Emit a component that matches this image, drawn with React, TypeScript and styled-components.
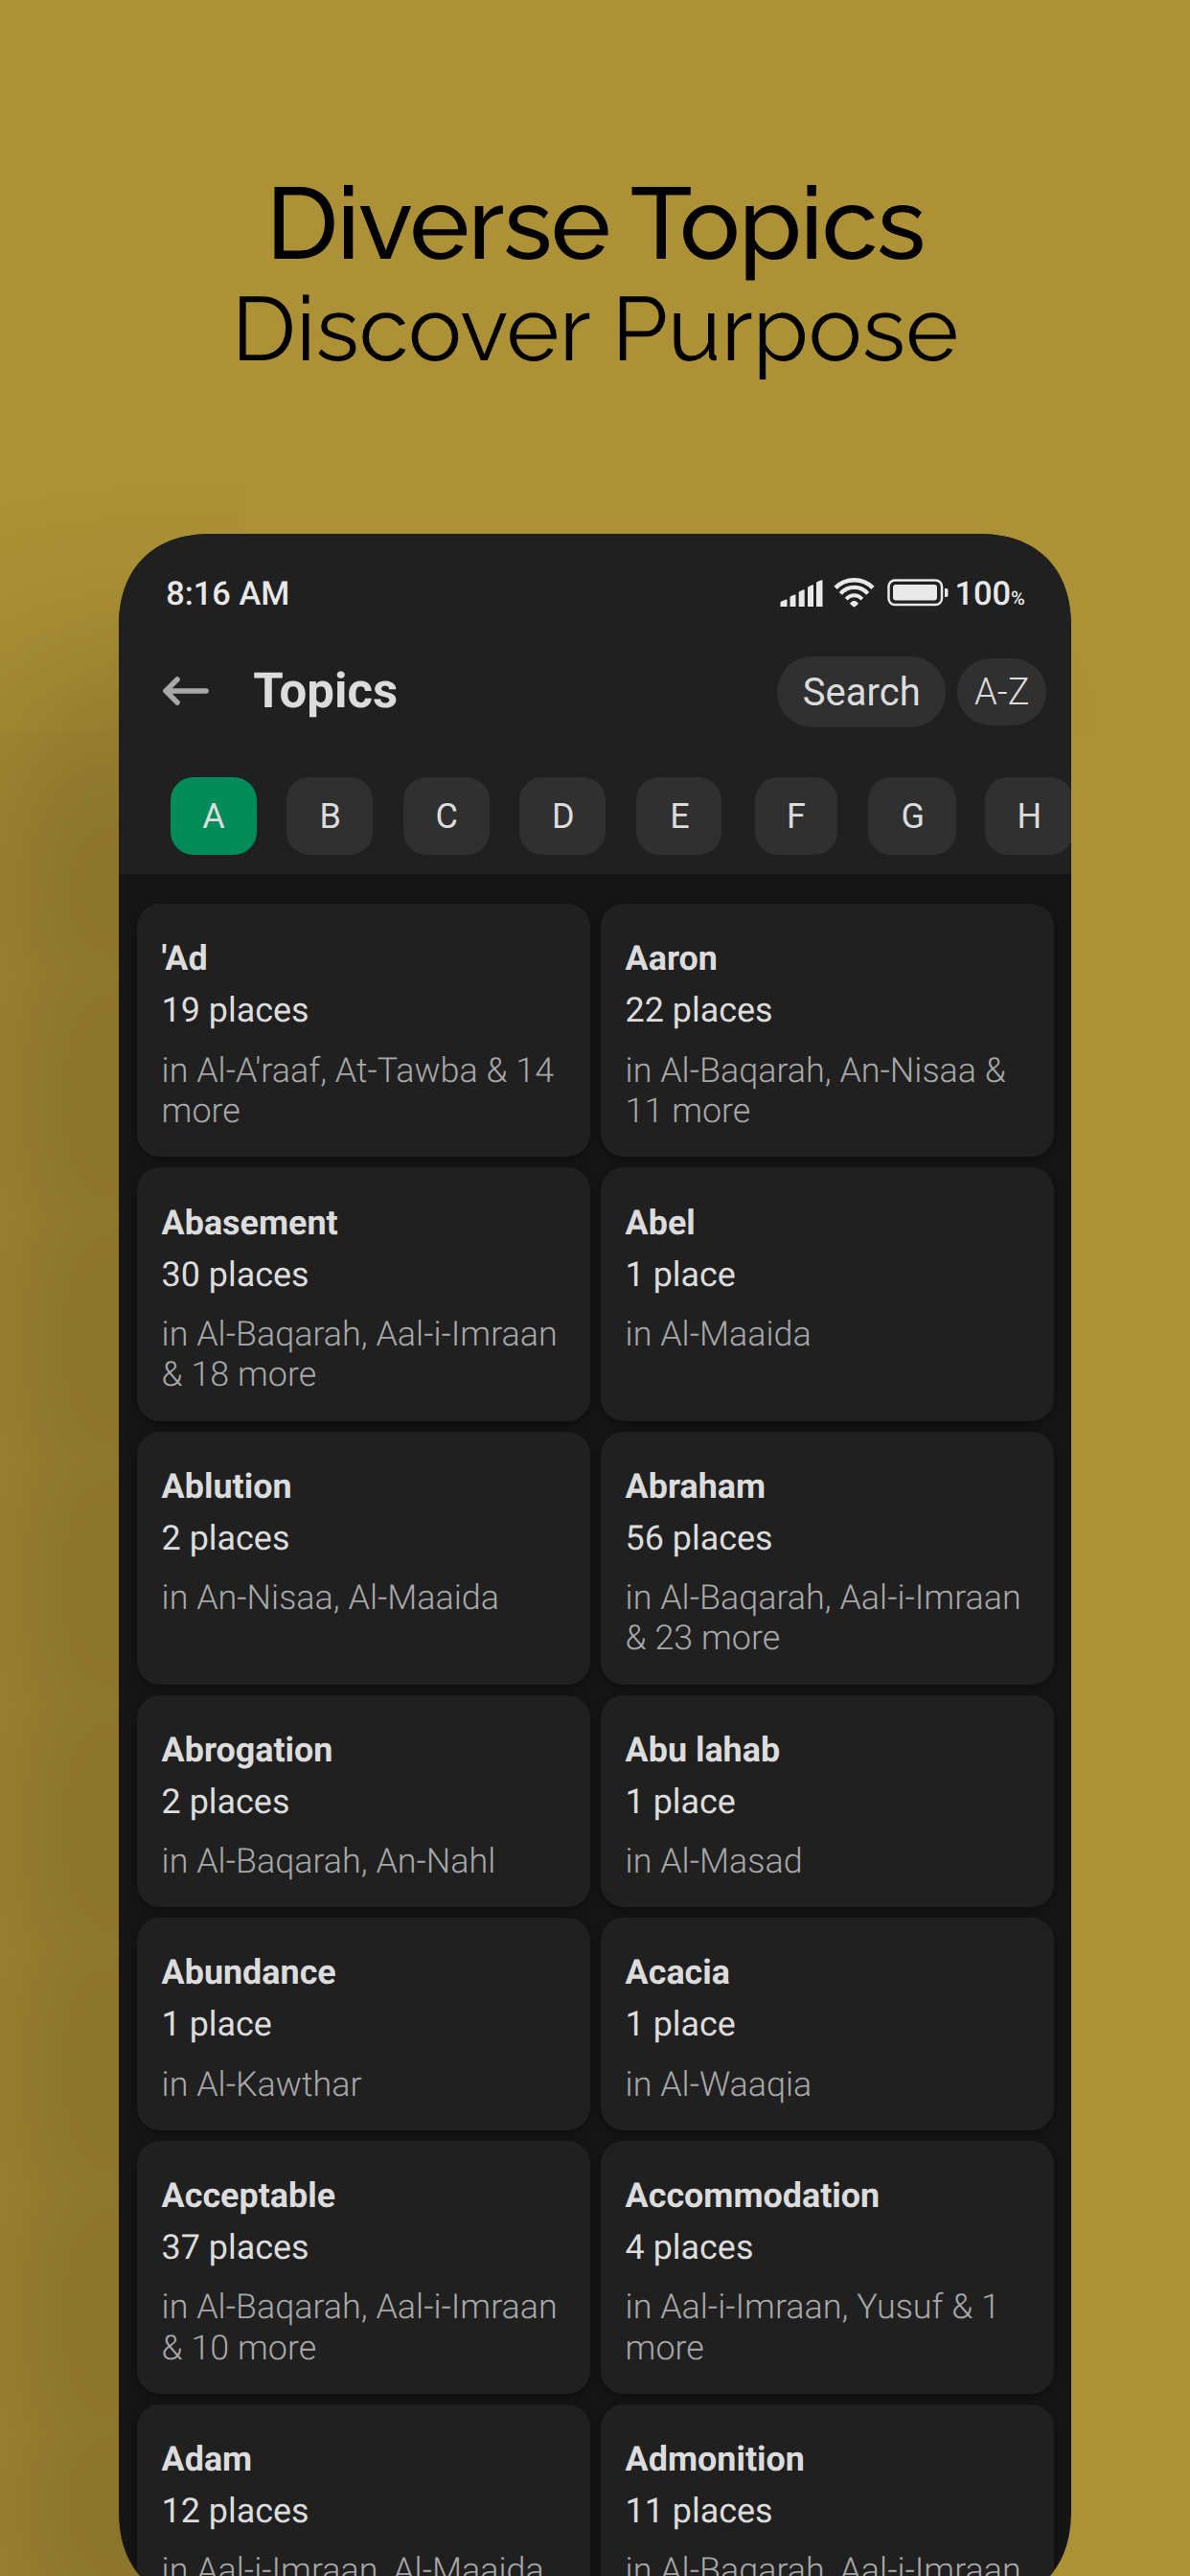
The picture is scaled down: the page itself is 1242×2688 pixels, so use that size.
import React from "react";
import styled, { createGlobalStyle } from "styled-components";

const GlobalStyle = createGlobalStyle`
  * { box-sizing: border-box; }
  html, body { margin: 0; padding: 0; background: #ac9136; }
`;

const Poster = styled.main`
  width: 1242px;
  height: 2688px;
  overflow: hidden;
  background: #ac9136;
  display: flex;
  flex-direction: column;
  align-items: center;
  font-family: Roboto, "Liberation Sans", sans-serif;
  text-rendering: geometricPrecision;
`;

const Headline = styled.header`
  height: 557px;
  flex: none;
  padding-top: 173px;
  display: flex;
  flex-direction: column;
  align-items: center;
  color: #000;
  font-family: Raleway, Lato, sans-serif;
  white-space: nowrap;
`;

const Title = styled.h1`
  margin: 0;
  font-size: 105.6px;
  line-height: 120px;
  font-weight: 500;
  letter-spacing: -1.6px;
`;

const Subtitle = styled.p`
  margin: 0;
  font-size: 94px;
  line-height: 100px;
  font-weight: 400;
`;

const Phone = styled.section`
  width: 993.6px;
  height: 2160px;
  flex: none;
  overflow: hidden;
  border-radius: 98px;
  corner-shape: superellipse(1.2);
  background: #151515;
  box-shadow: -150px 150px 200px rgba(0, 0, 0, 0.225);
`;

const TopArea = styled.div`
  height: 355px;
  background: #202020;
`;

const StatusBar = styled.div`
  height: 124px;
  padding: 2px 48px 0 49px;
  display: flex;
  align-items: center;
  justify-content: space-between;
  color: #e8e8e8;
  font-size: 34.4px;
  font-weight: 500;
`;

const StatusIcons = styled.div`
  display: flex;
  align-items: center;
`;

const StatusIcon = styled.svg`
  flex: none;
  margin-bottom: 3px;
`;

const Level = styled.span`
  margin-left: 5.500px;
`;

const BatterySlot = styled.span`
  display: flex;
  margin-left: 12px;
`;

const Percent = styled.small`
  font-size: 20px;
`;

const AppBar = styled.div`
  height: 82px;
  padding: 0 25.500px 0 45px;
  display: flex;
  align-items: center;
`;

const BackIcon = styled.svg`
  flex: none;
  margin-bottom: 2px;
`;

const ScreenTitle = styled.h2`
  margin: 0 auto 0 45px;
  font-size: 51px;
  line-height: 60px;
  font-weight: 700;
  color: #dcdcdc;
`;

const Pill = styled.button<{ $w: number; $h: number; $light?: boolean }>`
  width: ${(p) => p.$w}px;
  height: ${(p) => p.$h}px;
  margin-left: 12px;
  padding: 0;
  border: 0;
  border-radius: 37px;
  background: #303030;
  color: #dcdcdc;
  font-family: inherit;
  font-size: ${(p) => (p.$light ? 38 : 40)}px;
  font-weight: ${(p) => (p.$light ? 300 : 400)};
`;

const Letters = styled.nav`
  display: flex;
  padding: 48px 0 0 53.400px;
  overflow: hidden;
`;

const Slot = styled.div`
  flex: 0 0 121.6px;
`;

const Letter = styled.button<{ $active: boolean; $w: number; $shift: number }>`
  display: block;
  width: ${(p) => p.$w}px;
  height: 81px;
  margin-left: ${(p) => p.$shift}px;
  padding: 0 0 0 1px;
  border: 0;
  border-radius: 24px;
  background: ${(p) => (p.$active ? "#008c5a" : "#303030")};
  color: #dcdcdc;
  font-family: inherit;
  font-size: 36px;
`;

const Grid = styled.div`
  display: grid;
  grid-template-columns: 473px 473px;
  column-gap: 11px;
  row-gap: 11px;
  padding: 31.300px 0 0 18.400px;
`;

const Card = styled.article`
  padding: 35.100px 20px 26.700px 26px;
  border-radius: 24px;
  background: #202020;
  box-shadow: 0 3px 8px rgba(0, 0, 0, 0.35);
`;

const Name = styled.h3`
  margin: 0;
  font-size: 35.9px;
  line-height: 44px;
  font-weight: 700;
  color: #dcdcdc;
`;

const Count = styled.p`
  margin: 11px 0 0;
  font-size: 35.9px;
  line-height: 42px;
  color: #dcdcdc;
`;

const Places = styled.p`
  margin: 20.200px 0 0;
  font-size: 35.9px;
  line-height: 42.600px;
  font-weight: 300;
  color: #a8a8a8;
  white-space: pre-line;
`;

const letters: [string, number, number][] = [
  ["A", 90, 0], ["B", 90, 0], ["C", 90, 0], ["D", 90, 0],
  ["E", 89, 0.5], ["F", 86, 2], ["G", 92, -1], ["H", 92, -1],
];

const topics: [string, string, string][] = [
  ["'Ad", "19 places", "in Al-A'raaf, At-Tawba & 14\nmore"],
  ["Aaron", "22 places", "in Al-Baqarah, An-Nisaa &\n11 more"],
  ["Abasement", "30 places", "in Al-Baqarah, Aal-i-Imraan\n& 18 more"],
  ["Abel", "1 place", "in Al-Maaida"],
  ["Ablution", "2 places", "in An-Nisaa, Al-Maaida"],
  ["Abraham", "56 places", "in Al-Baqarah, Aal-i-Imraan\n& 23 more"],
  ["Abrogation", "2 places", "in Al-Baqarah, An-Nahl"],
  ["Abu lahab", "1 place", "in Al-Masad"],
  ["Abundance", "1 place", "in Al-Kawthar"],
  ["Acacia", "1 place", "in Al-Waaqia"],
  ["Acceptable", "37 places", "in Al-Baqarah, Aal-i-Imraan\n& 10 more"],
  ["Accommodation", "4 places", "in Aal-i-Imraan, Yusuf & 1\nmore"],
  ["Adam", "12 places", "in Aal-i-Imraan, Al-Maaida"],
  ["Admonition", "11 places", "in Al-Baqarah, Aal-i-Imraan"],
];

const Signal = () => (
  <StatusIcon width="56" height="32" viewBox="0 0 56 32" fill="#e8e8e8">
    <path d="M0.5 30v-4q0-1 1-1.500l5-2q1-.3 1 .7v6.800z" />
    <path d="M10.500 30V20.500q0-1 1-1.500l4-1.500q1-.3 1 .7V30z" />
    <path d="M19.700 30V15.500q0-1 1-1.500l4-1.700q1-.3 1 .7V30z" />
    <path d="M29 30V10.500q0-1 1-1.500l4-1.700q1-.3 1 .7V30z" />
    <path d="M38 30V5.500q0-1 1-1.500l4.500-1.700q1-.3 1 .7V30z" />
  </StatusIcon>
);

const Wifi = () => (
  <StatusIcon width="44" height="33" viewBox="0 0 44 33" fill="none" stroke="#e8e8e8">
    <path strokeWidth="4.6" d="M2 11.300a27.500 27.500 0 0 1 39 0" />
    <path strokeWidth="4.2" d="M7.300 17.300a18.800 18.800 0 0 1 28.400 0" />
    <path strokeWidth="4" d="M13.300 23.300a10.300 10.300 0 0 1 16.400 0" />
    <path d="M17.200 27.200q4.300-5 8.600 0q.3 1-3.300 3.800q-1 .6-2 0q-3.600-2.800-3.300-3.800z" fill="#e8e8e8" stroke="none" />
  </StatusIcon>
);

const Battery = () => (
  <StatusIcon width="65" height="30" viewBox="0 0 65 30">
    <rect x="1.500" y="1.500" width="55.500" height="25.500" rx="6.500" fill="none" stroke="#e8e8e8" strokeWidth="2.500" />
    <rect x="6" y="6" width="46" height="16.500" rx="3" fill="#e8e8e8" />
    <path d="M60 10h1.500q2 0 2 2v5q0 2-2 2H60z" fill="#e8e8e8" />
  </StatusIcon>
);

const BackArrow = () => (
  <BackIcon width="50" height="34" viewBox="0 0 50 34" fill="none" stroke="#a8a8a8" strokeWidth="5.600" strokeLinecap="round" strokeLinejoin="round">
    <path d="M46 17H4M16 5L4 17l12 12" />
  </BackIcon>
);

export default function App() {
  return (
    <Poster>
      <GlobalStyle />
      <Headline>
        <Title>Diverse Topics</Title>
        <Subtitle>Discover Purpose</Subtitle>
      </Headline>
      <Phone>
        <TopArea>
          <StatusBar>
            <span>8:16 AM</span>
            <StatusIcons>
              <Signal />
              <Wifi />
              <BatterySlot>
                <Battery />
              </BatterySlot>
              <Level>100<Percent>%</Percent></Level>
            </StatusIcons>
          </StatusBar>
          <AppBar>
            <BackArrow />
            <ScreenTitle>Topics</ScreenTitle>
            <Pill $w={176} $h={74}>Search</Pill>
            <Pill $w={93} $h={70} $light>A-Z</Pill>
          </AppBar>
          <Letters>
            {letters.map(([l, w, s], i) => (
              <Slot key={l}>
                <Letter $active={i === 0} $w={w} $shift={s}>{l}</Letter>
              </Slot>
            ))}
          </Letters>
        </TopArea>
        <Grid>
          {topics.map(([name, count, places]) => (
            <Card key={name}>
              <Name>{name}</Name>
              <Count>{count}</Count>
              <Places>{places}</Places>
            </Card>
          ))}
        </Grid>
      </Phone>
    </Poster>
  );
}
